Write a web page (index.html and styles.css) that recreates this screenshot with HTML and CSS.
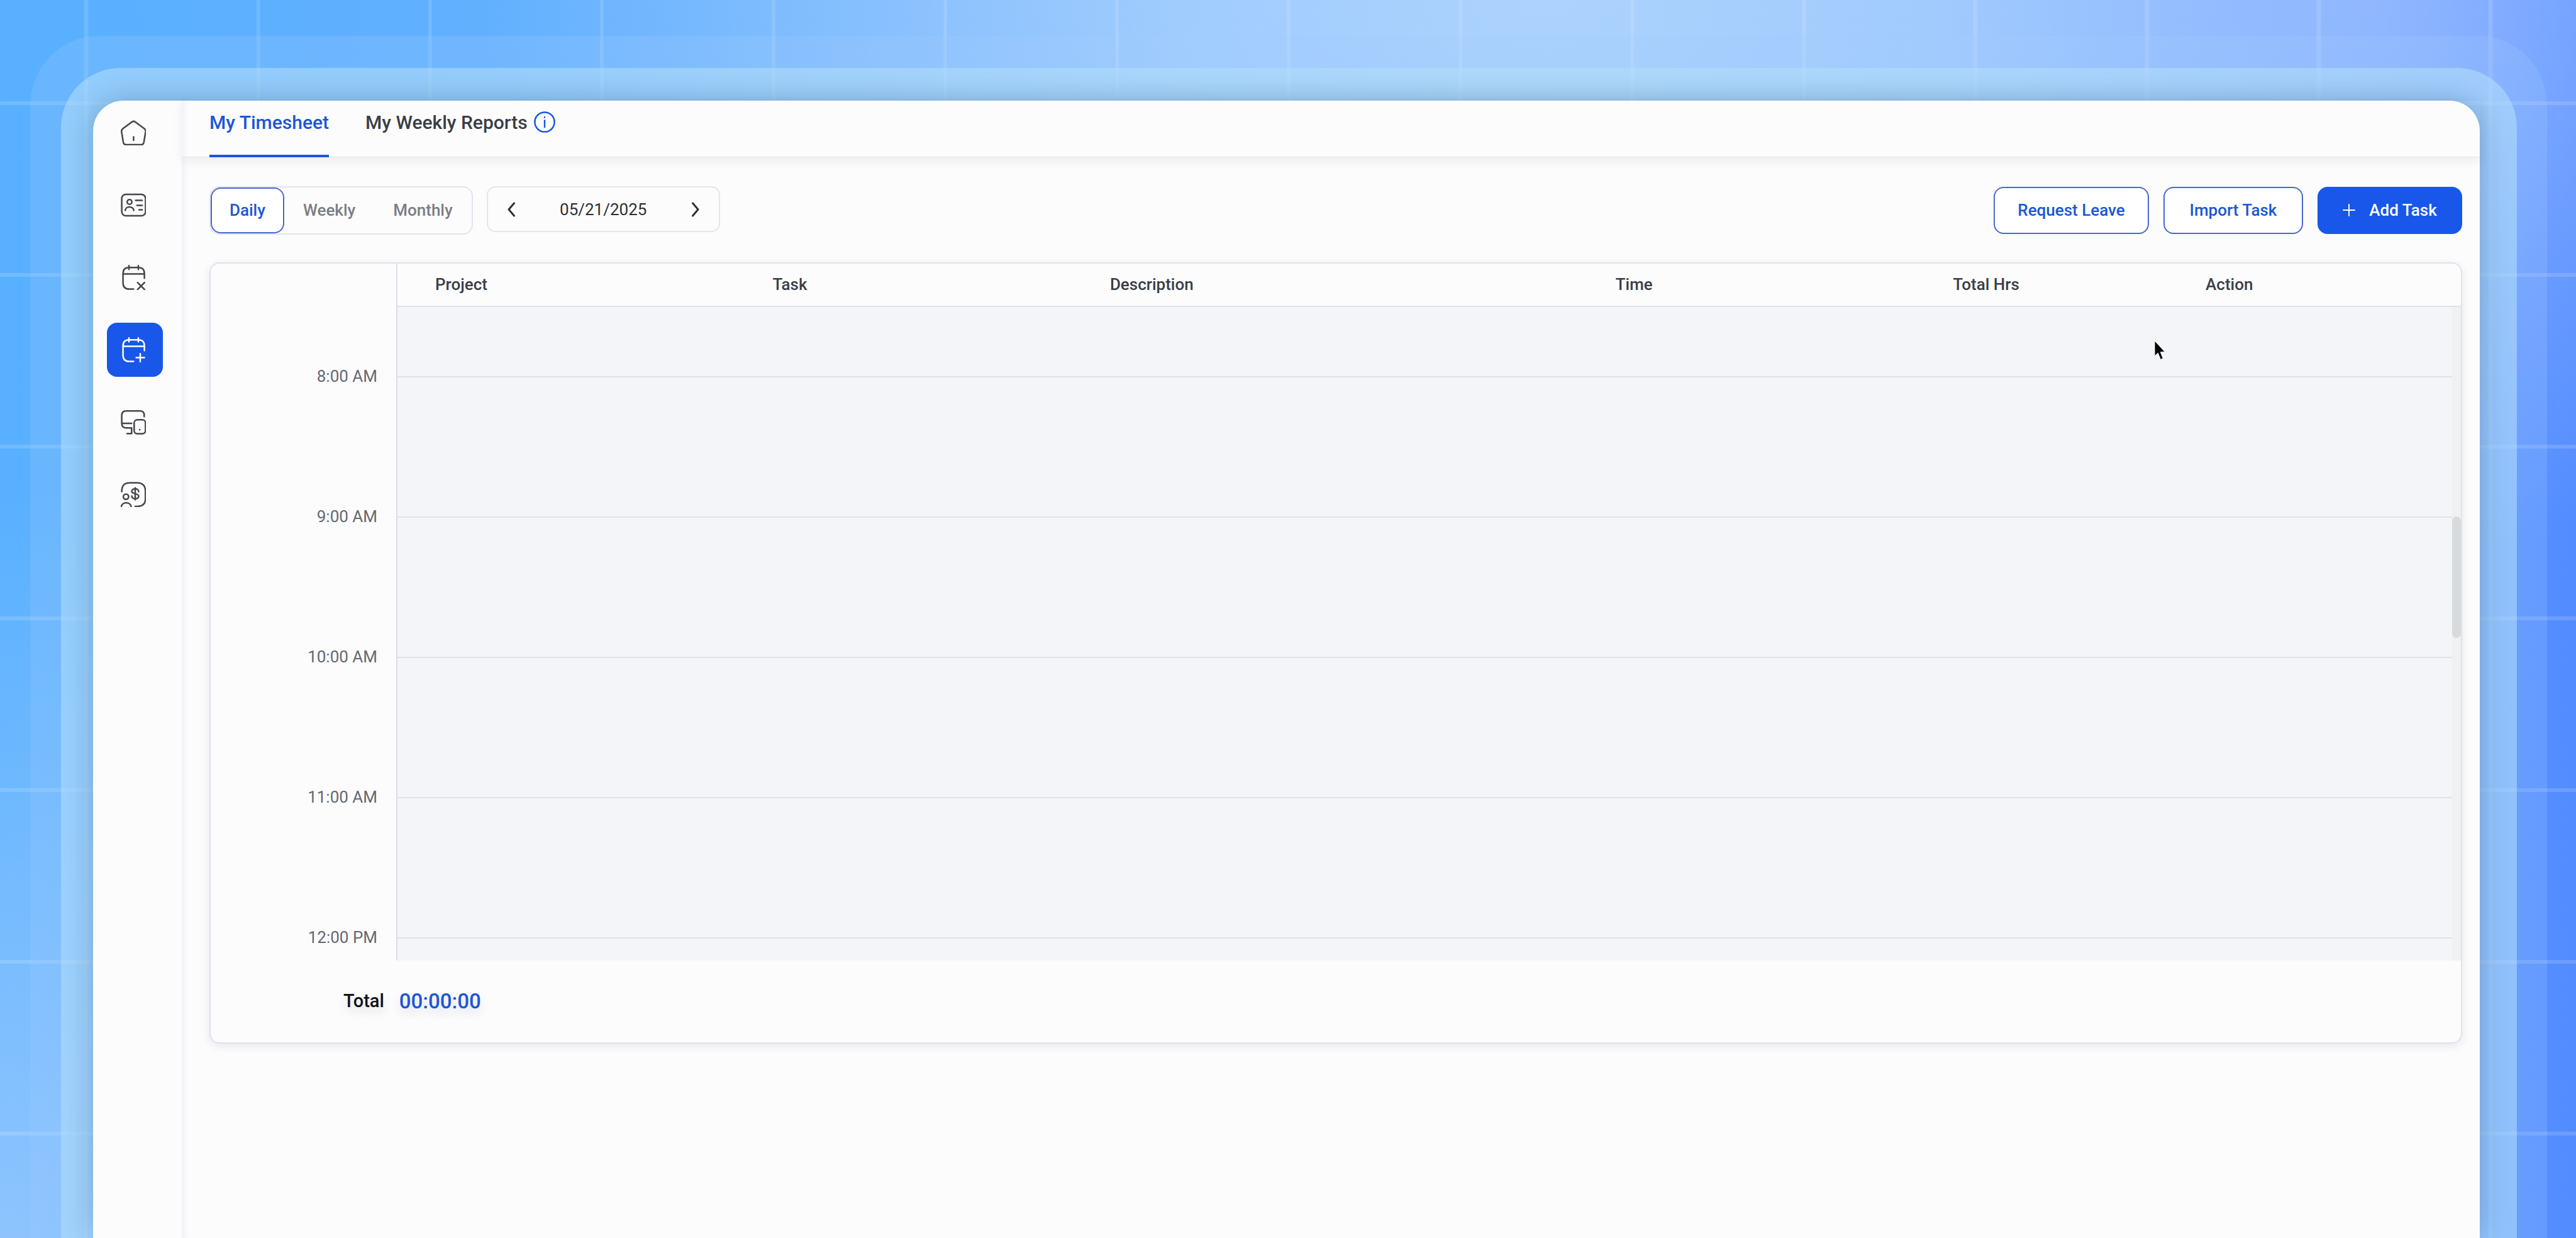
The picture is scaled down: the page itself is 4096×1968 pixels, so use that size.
FILE: index.html
```html
<!DOCTYPE html>
<html lang="en">
<head>
    <meta charset="UTF-8">
    <meta name="viewport" content="width=device-width, initial-scale=1.0">
    <title>My Timesheet</title>
    <link rel="stylesheet" href="styles.css">
</head>
<body>
    <div class="frame-outer">
        <div class="frame-inner">
            <div class="window">
                <nav class="sidebar" aria-label="Main">
                    <a class="nav-item" href="#" aria-label="Home">
                        <svg class="nav-icon" viewBox="0 0 40 40">
                            <path d="M17.5 3Q20.4 .8 23.3 3L37.5 13.5Q40 15.5 39.5 18.5L36.8 35Q36 39 32.5 39H8.5Q4.8 39 4 35L1.3 18.5Q.8 15.5 3.3 13.5Z"/>
                            <path d="M20.4 26.5V32"/>
                        </svg>
                    </a>
                    <a class="nav-item" href="#" aria-label="Employees">
                        <svg class="nav-icon" viewBox="0 0 40 40">
                            <rect x="1.6" y="3" width="37.8" height="34" rx="6.5"/>
                            <circle cx="14" cy="15" r="3.8"/>
                            <path d="M7.3 28.5C7.3 21.3 20.6 21.3 20.6 28.5M23.6 12.6H34M25.8 20.4H34M29.2 27.5H34"/>
                        </svg>
                    </a>
                    <a class="nav-item" href="#" aria-label="Leaves">
                        <svg class="nav-icon" viewBox="0 0 40 40">
                            <path d="M37.6 21.3V14Q37.6 4.3 28 4.3H13Q3.6 4.3 3.6 14V28.5Q3.6 38.6 13.6 38.6H20.3M3.6 14.6H37.6M13 1.3V7.3M28 1.3V7.3"/>
                            <path d="M26.8 28.2L37.8 39.2M37.8 28.2L26.8 39.2"/>
                        </svg>
                    </a>
                    <a class="nav-item active" href="#" aria-label="Timesheet">
                        <svg class="nav-icon" viewBox="0 0 40 40">
                            <path d="M37.6 21.3V14Q37.6 4.3 28 4.3H13Q3.6 4.3 3.6 14V28.5Q3.6 38.6 13.6 38.6H20.3M3.6 14.6H37.6M13 1.3V7.3M28 1.3V7.3"/>
                            <path d="M24.6 32.6H37.6M31 26.2V39"/>
                        </svg>
                    </a>
                    <a class="nav-item" href="#" aria-label="Devices">
                        <svg class="nav-icon" viewBox="0 0 40 40">
                            <path d="M37.3 11.3V9Q37.3 2.3 30.5 2.3H9Q1.6 2.3 1.6 9.5V22Q1.6 29.3 9 29.3H17.3V38.3H10M1.6 22H17.3"/>
                            <rect x="21.3" y="16.3" width="18" height="22.3" rx="5"/>
                            <path d="M30.2 32V32.2"/>
                        </svg>
                    </a>
                    <a class="nav-item" href="#" aria-label="Payroll">
                        <svg class="nav-icon" viewBox="0 0 40 40">
                            <path d="M1.6 15.6C1.6 5 6 1.6 15 1.6H26Q39.2 1.6 39.2 15V27Q39.2 39 26 39H23"/>
                            <circle cx="8.3" cy="23.6" r="4.2"/>
                            <path d="M.8 39.4C2.5 31.3 15 31.3 16.6 39.4"/>
                            <path d="M28.5 15.5C28.5 9.7 17.5 9.7 17.5 15C17.5 20.2 28.5 17.5 28.5 23C28.5 28.3 17.5 28.3 17.5 22.5M23 9.4V28.4"/>
                        </svg>
                    </a>
                </nav>

                <main class="main">
                    <header class="tabs">
                        <a class="tab active" href="#">My Timesheet</a>
                        <a class="tab" href="#">My Weekly Reports
                            <svg class="info-icon" viewBox="0 0 34 34">
                                <circle cx="17" cy="17" r="15.6"/>
                                <path d="M17 14.5V25M17 9.2V9.6"/>
                            </svg>
                        </a>
                    </header>

                    <div class="toolbar">
                        <div class="segment">
                            <button class="segment-btn active" type="button">Daily</button>
                            <button class="segment-btn" type="button">Weekly</button>
                            <button class="segment-btn" type="button">Monthly</button>
                        </div>
                        <div class="date-picker">
                            <button class="arrow" type="button" aria-label="Previous day">
                                <svg viewBox="0 0 14 24"><path d="M11.5 2L3 12L11.5 22"/></svg>
                            </button>
                            <input class="date-input" type="text" value="05/21/2025" aria-label="Date">
                            <button class="arrow" type="button" aria-label="Next day">
                                <svg viewBox="0 0 14 24"><path d="M2.5 2L11 12L2.5 22"/></svg>
                            </button>
                        </div>
                        <div class="actions">
                            <button class="btn btn-leave" type="button">Request Leave</button>
                            <button class="btn btn-import" type="button">Import Task</button>
                            <button class="btn btn-primary" type="button">
                                <svg viewBox="0 0 20 20"><path d="M10 1V19M1 10H19"/></svg>
                                Add Task
                            </button>
                        </div>
                    </div>

                    <section class="card">
                        <div class="schedule">
                            <div class="hours">
                                <div class="hour">8:00 AM</div>
                                <div class="hour">9:00 AM</div>
                                <div class="hour">10:00 AM</div>
                                <div class="hour">11:00 AM</div>
                                <div class="hour">12:00 PM</div>
                            </div>
                            <div class="entries">
                                <table class="sheet">
                                    <thead>
                                        <tr>
                                            <th class="col-md">Project</th>
                                            <th class="col-md">Task</th>
                                            <th class="col-lg">Description</th>
                                            <th class="col-md">Time</th>
                                            <th class="col-sm">Total Hrs</th>
                                            <th>Action</th>
                                        </tr>
                                    </thead>
                                    <tbody>
                                        <tr class="slot-first"><td colspan="6"></td></tr>
                                        <tr><td colspan="6"></td></tr>
                                        <tr><td colspan="6"></td></tr>
                                        <tr><td colspan="6"></td></tr>
                                        <tr><td colspan="6"></td></tr>
                                        <tr class="slot-last"><td colspan="6"></td></tr>
                                    </tbody>
                                </table>
                                <div class="scroll-track"><div class="scroll-thumb"></div></div>
                                <svg class="cursor" viewBox="0 0 20 32">
                                    <path d="M1 1V25L6.3 20.2L10.4 30.5L14.4 28.8L10.3 18.8L17 18.2Z"/>
                                </svg>
                            </div>
                        </div>
                        <div class="total">
                            <span class="total-label">Total</span>
                            <span class="total-value">00:00:00</span>
                        </div>
                    </section>
                </main>
            </div>
        </div>
    </div>
</body>
</html>
```

FILE: styles.css
```css
* {
    box-sizing: border-box;
}

body {
    margin: 0;
    height: 100vh;
    overflow: hidden;
    display: flex;
    padding: 57px 46px 0 48px;
    font-family: Roboto, "Liberation Sans", sans-serif;
    color: #3a3e45;
    background:
        repeating-linear-gradient(to right, rgba(255, 255, 255, 0.13) 0 6px, transparent 6px 273px) 135px 0,
        repeating-linear-gradient(to bottom, rgba(255, 255, 255, 0.15) 0 6px, transparent 6px 273px) 0 -112px,
        radial-gradient(ellipse 1700px 1100px at 60% 0, #acd3fd, rgba(172, 211, 253, 0.8) 35%, rgba(172, 211, 253, 0)),
        radial-gradient(ellipse 600px 1300px at 0 105%, #92c6fe, rgba(146, 198, 254, 0)),
        radial-gradient(ellipse 900px 900px at 92% 0, #86adff, rgba(134, 173, 255, 0)),
        linear-gradient(to right, #58b0ff, #66b0fe 30%, #78abff 75%, #528cff);
    background-repeat: repeat-x, repeat-y, no-repeat, no-repeat, no-repeat, no-repeat;
    background-size: auto, 100% 200%, auto, auto, auto, auto;
}

a {
    color: inherit;
    text-decoration: none;
}

button,
input {
    font-family: inherit;
    margin: 0;
}

svg {
    display: block;
    fill: none;
    stroke: currentColor;
    stroke-linecap: round;
    stroke-linejoin: round;
}

/* translucent rims around the window */
.frame-outer {
    flex: 1;
    display: flex;
    padding: 51px 48px 0 49px;
    border-radius: 110px 110px 0 0;
    background: rgba(165, 205, 255, 0.22);
}

.frame-inner {
    flex: 1;
    display: flex;
    padding: 52px 59px 0 51px;
    border-radius: 95px 95px 0 0;
    background: rgba(182, 226, 252, 0.55);
    overflow: hidden;
}

.window {
    flex: 1;
    display: flex;
    border-radius: 48px 48px 0 0;
    background: #fcfcfd;
    box-shadow: 0 0 50px rgba(70, 115, 160, 0.5);
}

/* sidebar */
.sidebar {
    width: 141px;
    padding: 8px 22px;
    display: flex;
    flex-direction: column;
    gap: 29px;
    color: #44464a;
}

.nav-item {
    width: 89px;
    height: 86px;
    padding-left: 22px;
    display: flex;
    align-items: center;
    border-radius: 16px;
}

.nav-item.active {
    background: #1857ea;
    color: #fff;
}

.nav-icon {
    width: 40px;
    height: 40px;
    stroke-width: 2.5;
}

.main {
    flex: 1;
    box-shadow: inset 10px 0 10px -8px rgba(40, 50, 110, 0.08);
}

/* tabs */
.tabs {
    height: 90px;
    padding-left: 44px;
    display: flex;
    gap: 58px;
    border-bottom: 1px solid #e6e7ee;
    box-shadow: 0 6px 14px rgba(40, 50, 110, 0.08);
}

.tab {
    height: 90px;
    padding-bottom: 18px;
    display: flex;
    align-items: center;
    gap: 10px;
    font-size: 30px;
    font-weight: 500;
    border-bottom: 4px solid transparent;
}

.tab.active {
    color: #1c56d6;
    border-bottom-color: #1b55e2;
}

.info-icon {
    width: 34px;
    height: 34px;
    color: #1b55e2;
    stroke-width: 2.5;
}

/* toolbar */
.toolbar {
    padding: 46px 28px 44px 44px;
    display: flex;
    align-items: flex-start;
}

.segment {
    height: 77px;
    margin-right: 22px;
    display: flex;
    border: 2px solid #e2e4f0;
    border-radius: 16px;
}

.segment-btn {
    height: 73px;
    padding: 0 28px 2px;
    border: 2px solid transparent;
    border-radius: 16px;
    background: none;
    color: #7b7e84;
    font-size: 26px;
    font-weight: 500;
}

.segment-btn.active {
    border-color: #4a66d2;
    background: #fff;
    color: #1c56d6;
}

.date-picker {
    width: 371px;
    height: 73px;
    padding: 0 26px;
    display: flex;
    align-items: center;
    justify-content: space-between;
    border: 2px solid #e4e6ed;
    border-radius: 14px;
}

.arrow {
    padding: 4px;
    border: none;
    background: none;
    color: #2d3036;
}

.arrow svg {
    width: 14px;
    height: 24px;
    stroke-width: 3;
}

.date-input {
    width: 180px;
    padding: 0;
    border: none;
    background: none;
    color: #2d3036;
    font-size: 26px;
    text-align: center;
}

.actions {
    margin-left: auto;
    padding-top: 1px;
    display: flex;
    gap: 23px;
}

.btn {
    height: 75px;
    padding: 0 0 2px;
    display: flex;
    align-items: center;
    justify-content: center;
    border: 2px solid #4a66d2;
    border-radius: 16px;
    background: #fff;
    color: #1c56d6;
    font-size: 26px;
    font-weight: 500;
}

.btn-leave {
    width: 247px;
}

.btn-import {
    width: 222px;
}

.btn-primary {
    width: 230px;
    gap: 22px;
    border-color: #1857ea;
    background: #1857ea;
    color: #fff;
}

.btn-primary svg {
    width: 20px;
    height: 20px;
    stroke-width: 2;
}

/* timesheet */
.card {
    margin: 0 28px 0 44px;
    border: 2px solid #dfe2ec;
    border-radius: 16px;
    box-shadow: 0 4px 14px rgba(40, 50, 110, 0.1);
}

.schedule {
    display: flex;
}

.hours {
    width: 295px;
    height: 1108px;
    padding-top: 67px;
    overflow: hidden;
}

.hour {
    height: 223px;
    padding-right: 30px;
    display: flex;
    align-items: center;
    justify-content: flex-end;
    color: #646870;
    font-size: 26px;
}

.entries {
    flex: 1;
    position: relative;
    border-left: 2px solid #dcdfe9;
}

.sheet {
    width: 100%;
    table-layout: fixed;
    border-collapse: separate;
    border-spacing: 0;
}

.sheet th {
    height: 69px;
    padding: 0 0 2px 60px;
    border-bottom: 2px solid #dfe2ec;
    font-size: 26px;
    font-weight: 500;
    text-align: left;
}

.sheet td {
    height: 223px;
    padding: 0;
    border-bottom: 2px solid #dfe1e7;
    background: #f4f5f9;
}

.sheet .slot-first td {
    height: 112px;
}

.sheet .slot-last td {
    height: 35px;
    border-bottom: none;
}

.col-md {
    width: 16.35%;
}

.col-lg {
    width: 24.5%;
}

.col-sm {
    width: 12.25%;
}

/* scrollbar drawn over the right edge of the rows */
.scroll-track {
    position: absolute;
    top: 69px;
    right: 0;
    bottom: 0;
    width: 14px;
    padding-top: 333px;
    background: #f0f1f2;
}

.scroll-thumb {
    height: 193px;
    border-radius: 7px;
    background: #d7dbdc;
}

.cursor {
    position: absolute;
    top: 122px;
    right: 468px;
    width: 20px;
    height: 32px;
    fill: #000;
    stroke: #fff;
    stroke-width: 1;
}

.total {
    height: 130px;
    padding: 0 0 2px 211px;
    display: flex;
    align-items: center;
    gap: 24px;
    font-weight: 500;
    text-shadow: 0 8px 16px rgba(40, 50, 110, 0.15);
}

.total-label {
    color: #111318;
    font-size: 29px;
}

.total-value {
    color: #1c56d6;
    font-size: 33px;
}
```
